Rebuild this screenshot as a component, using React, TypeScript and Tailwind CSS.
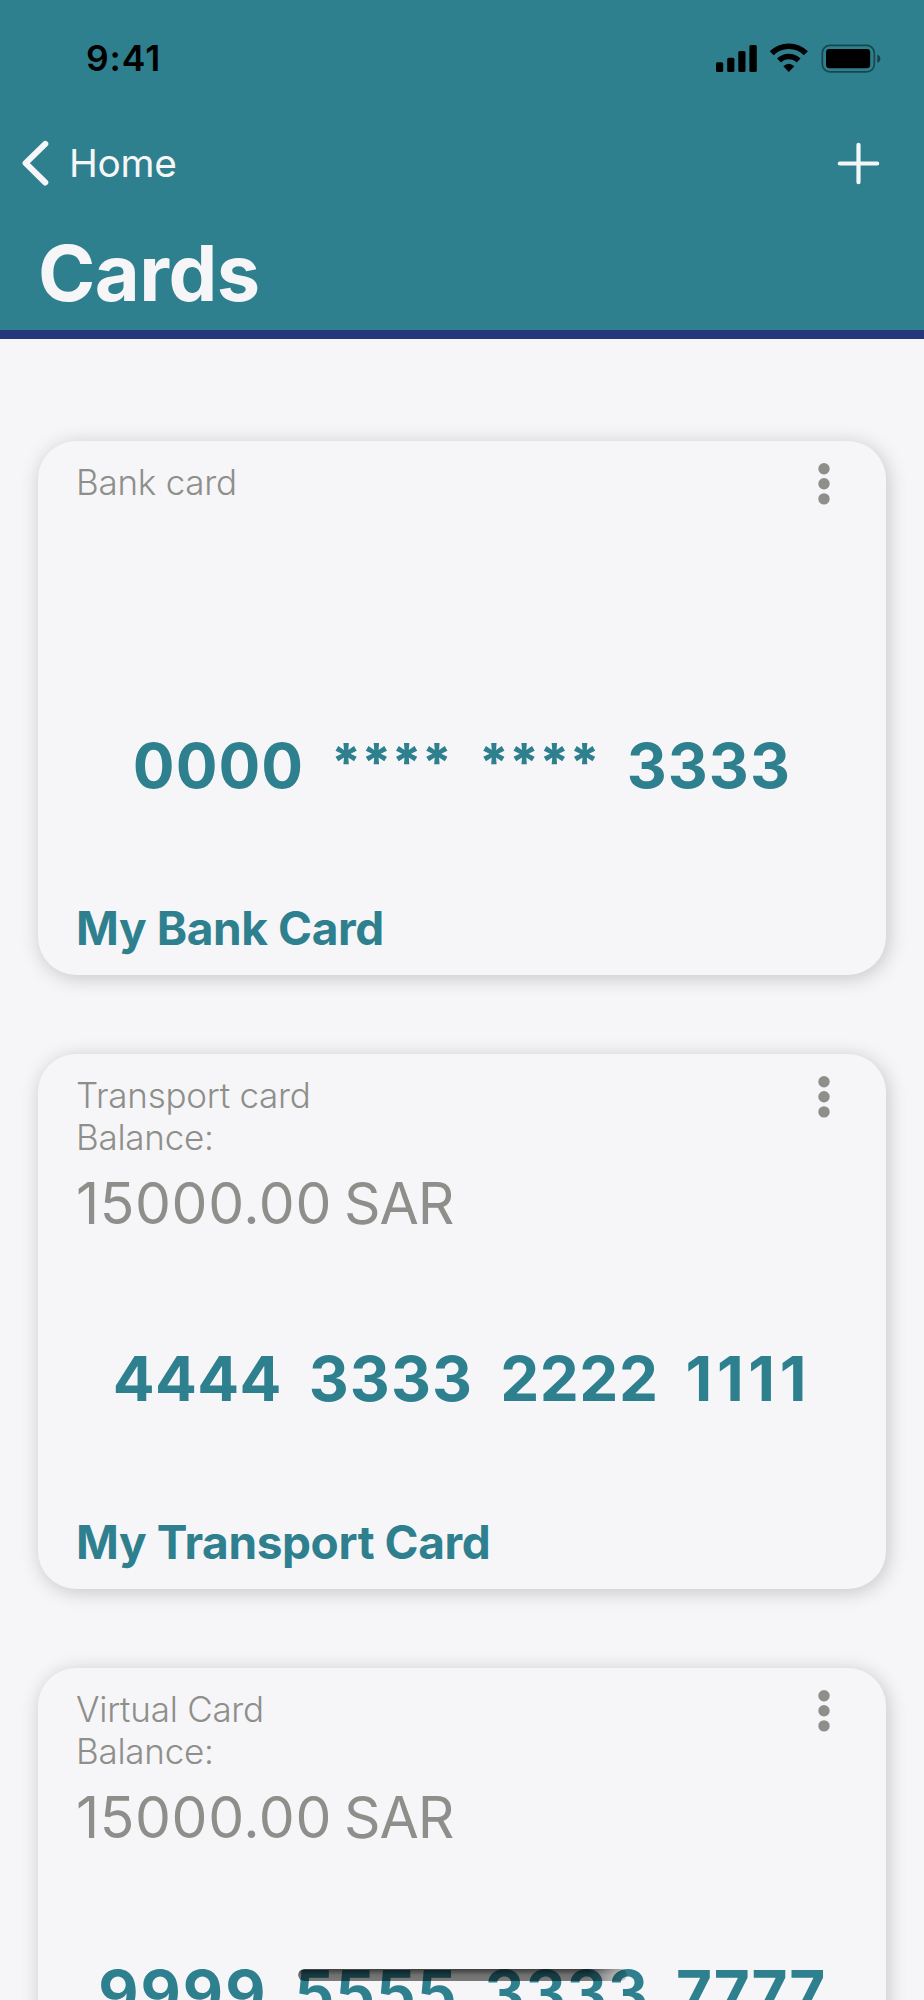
import clsx from "clsx";

type NumberGroup = { text: string; className: string };

type CardItem = {
  id: string;
  type: string;
  name?: string;
  balance?: { amount: string; currency: string };
  number: NumberGroup[];
};

const cards: CardItem[] = [
  {
    id: "bank",
    type: "Bank card",
    name: "My Bank Card",
    number: [
      { text: "0000", className: "tracking-[1px]" },
      { text: "****", className: "-mt-[3px] text-[52px] font-extrabold tracking-[-0.1px]" },
      { text: "****", className: "-mt-[3px] text-[52px] font-extrabold tracking-[-0.1px]" },
      { text: "3333", className: "tracking-[1.1px]" },
    ],
  },
  {
    id: "transport",
    type: "Transport card",
    name: "My Transport Card",
    balance: { amount: "15000.00", currency: "SAR" },
    number: [
      { text: "4444", className: "tracking-[0.3px]" },
      { text: "3333", className: "tracking-[1.1px]" },
      { text: "2222", className: "tracking-[0.5px]" },
      { text: "1111", className: "tracking-[4.7px]" },
    ],
  },
  {
    id: "virtual",
    type: "Virtual Card",
    balance: { amount: "15000.00", currency: "SAR" },
    number: [
      { text: "9999", className: "tracking-[2.1px]" },
      { text: "5555", className: "tracking-[1.1px]" },
      { text: "3333", className: "tracking-[1.1px]" },
      { text: "7777", className: "tracking-[0.5px]" },
    ],
  },
];

function StatusIcons() {
  return (
    <svg width="166" height="32" viewBox="0 0 166 32" fill="none" aria-hidden="true">
      {/* signal */}
      <g fill="#000">
        <rect x="0" y="20.3" width="7.2" height="9.7" rx="1.6" />
        <rect x="11.2" y="15.7" width="7.2" height="14.3" rx="1.6" />
        <rect x="22.3" y="9" width="7.2" height="21" rx="1.6" />
        <rect x="33.4" y="3" width="7.4" height="27" rx="1.6" />
      </g>
      {/* wifi */}
      <g transform="translate(53.8 1.4)">
        <path d="M1.9 9.9A24.2 24.2 0 0 1 36.1 9.9" stroke="#000" strokeWidth="5.6" />
        <path d="M9.2 17.2A13.9 13.9 0 0 1 28.8 17.2" stroke="#000" strokeWidth="5.6" />
        <path d="M13.5 22.9Q19 17.9 24.5 22.9L19 28.6Z" fill="#000" />
      </g>
      {/* battery */}
      <rect x="106.3" y="3.3" width="52" height="26.6" rx="7.6" stroke="#000" strokeOpacity="0.45" strokeWidth="1.7" />
      <rect x="110" y="7" width="44.2" height="19.2" rx="3.4" fill="#000" />
      <path d="M161.3 12.4C165.4 13.8 165.4 19.4 161.3 20.8Z" fill="#000" fillOpacity="0.5" />
    </svg>
  );
}

function Header() {
  return (
    <header className="flex h-[339px] flex-col border-b-[9px] border-[#25377b] bg-[#2e808e] text-[#f6f6f9]">
      <div className="flex h-20 items-end justify-between pr-[42px] pl-[86px] text-black">
        <span className="text-[35.5px] leading-[42px] font-semibold tracking-[0.9px]">9:41</span>
        <div className="pb-1.5">
          <StatusIcons />
        </div>
      </div>

      <nav className="mt-[60px] flex h-[46px] items-center justify-between pr-11 pl-[21px]">
        <button type="button" className="flex items-center gap-5">
          <svg width="28" height="46" viewBox="0 0 28 46" fill="none" aria-hidden="true">
            <path
              d="M24.3 3.9L4.6 23.2L24.3 42.5"
              stroke="currentColor"
              strokeWidth="6"
              strokeLinecap="round"
              strokeLinejoin="round"
            />
          </svg>
          <span className="text-[38.8px] leading-[46px] tracking-[-0.3px]">Home</span>
        </button>
        <button type="button" aria-label="Add card">
          <svg width="43" height="43" viewBox="0 0 43 43" fill="none" aria-hidden="true">
            <path d="M21.5 2.8V40.2M2.8 21.5H40.2" stroke="currentColor" strokeWidth="4.2" strokeLinecap="round" />
          </svg>
        </button>
      </nav>

      <h1 className="mt-[42px] px-[38px] text-[77.5px] leading-[90px] font-bold tracking-[-0.5px]">Cards</h1>
    </header>
  );
}

function Card({ card }: { card: CardItem }) {
  return (
    <article className="flex h-[534.3px] shrink-0 flex-col rounded-[38px] bg-[#f6f6f9] px-[38px] pt-5 pb-[19px] shadow-[2px_3px_20px_rgba(0,0,0,0.2)]">
      <div className="flex h-[268px] shrink-0 items-start justify-between text-[#8e8f8a]">
        <div className="text-[35px] leading-[42px] font-light tracking-[-0.25px]">
          <p>{card.type}</p>
          {card.balance && (
            <>
              <p>Balance:</p>
              <p className="mt-3 flex gap-3 text-[57px] leading-[68px] font-normal">
                <span className="tracking-[0.6px]">{card.balance.amount}</span>
                <span className="tracking-[-1px]">{card.balance.currency}</span>
              </p>
            </>
          )}
        </div>
        <button type="button" aria-label="More" className="mt-0.5 mr-[17.6px]">
          <svg width="12" height="42" viewBox="0 0 12 42" fill="currentColor" aria-hidden="true">
            <circle cx="6" cy="5.7" r="5.7" />
            <circle cx="6" cy="20.8" r="5.7" />
            <circle cx="6" cy="35.9" r="5.7" />
          </svg>
        </button>
      </div>

      <div className="-mx-[38px] flex h-[74px] justify-center gap-[27px] text-[62px] leading-[74px] font-bold text-[#2e808e]">
        {card.number.map((group, i) => (
          <span key={i} className={clsx("shrink-0", group.className)}>
            {group.text}
          </span>
        ))}
      </div>

      {card.name && (
        <h2 className="mt-auto text-[46px] leading-[56px] font-bold tracking-[-0.4px] text-[#2e808e]">{card.name}</h2>
      )}
    </article>
  );
}

export default function App() {
  return (
    <div className="relative h-[2000px] w-[924px] overflow-hidden bg-[#f6f6f9] font-[Inter,sans-serif]">
      <Header />
      <main className="flex flex-col gap-[79.2px] px-[38px] pt-[102px]">
        {cards.map((card) => (
          <Card key={card.id} card={card} />
        ))}
      </main>

      {/* home indicator */}
      <div className="absolute bottom-[19px] left-[298px] h-3 w-[329px] rounded-full bg-linear-to-b from-black/75 via-black/55 to-black/50 mask-r-from-88% mask-r-to-105%" />
    </div>
  );
}
